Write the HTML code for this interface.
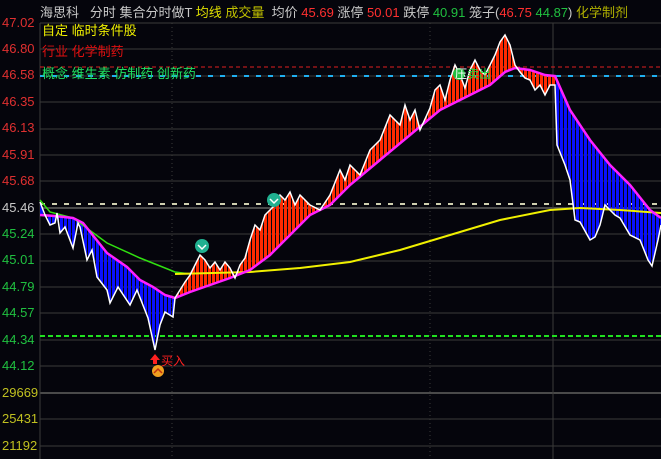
<!DOCTYPE html>
<html><head><meta charset="utf-8"><style>
body{margin:0;width:661px;height:459px;background:#05050c;overflow:hidden;font-family:"Liberation Sans","Noto Sans CJK SC",sans-serif;}
.t{position:absolute;font-size:13px;white-space:nowrap;line-height:14px}
</style></head><body>
<svg width="661" height="459" style="position:absolute;left:0;top:0">
<defs>
<pattern id="pr" width="4" height="4" patternUnits="userSpaceOnUse"><rect width="3" height="4" fill="#ff2a00"/></pattern>
<pattern id="pb" width="4" height="4" patternUnits="userSpaceOnUse"><rect width="3" height="4" fill="#0a10ff"/></pattern>
</defs>
<g stroke="#3a3a3a" stroke-width="1">
<line x1="40" y1="23" x2="661" y2="23"/>
<line x1="40" y1="49" x2="661" y2="49"/><line x1="40" y1="76" x2="661" y2="76"/>
<line x1="40" y1="102" x2="661" y2="102"/><line x1="40" y1="129" x2="661" y2="129"/>
<line x1="40" y1="155" x2="661" y2="155"/><line x1="40" y1="181" x2="661" y2="181"/>
<line x1="40" y1="208" x2="661" y2="208" stroke-width="2" stroke="#4a4a4a"/><line x1="40" y1="234" x2="661" y2="234"/>
<line x1="40" y1="261" x2="661" y2="261"/><line x1="40" y1="287" x2="661" y2="287"/>
<line x1="40" y1="313" x2="661" y2="313"/><line x1="40" y1="340" x2="661" y2="340"/>
<line x1="40" y1="366" x2="661" y2="366"/>
<line x1="40" y1="393" x2="661" y2="393" stroke-width="2" stroke="#4a4a4a"/>
<line x1="40" y1="419" x2="661" y2="419"/><line x1="40" y1="446" x2="661" y2="446"/>
<line x1="40" y1="23" x2="40" y2="459"/>
<line x1="553" y1="23" x2="553" y2="459"/>
<line x1="172" y1="23" x2="172" y2="459" stroke-dasharray="1,3"/>
<line x1="430" y1="23" x2="430" y2="459" stroke-dasharray="1,3"/>
</g>
<line x1="40" y1="67" x2="661" y2="67" stroke="#e02020" stroke-dasharray="4,3"/>
<line x1="40" y1="76" x2="661" y2="76" stroke="#20b0f0" stroke-dasharray="5,7" stroke-width="2"/>
<line x1="40" y1="204" x2="661" y2="204" stroke="#d0d0b0" stroke-dasharray="5,7" stroke-width="2"/>
<line x1="40" y1="336" x2="661" y2="336" stroke="#20e020" stroke-dasharray="5,3" stroke-width="2"/>
<!-- fills -->
<polygon fill="url(#pb)" points="40,202 45,215 50,225 55,223 57,213 60,233 65,227 73,248 78,223 80,227 87,260 92,250 97,277 107,290 110,303 118,287 130,305 137,290 148,318 155,350 160,325 165,312 173,317 175,298 165,295 153,287 140,280 127,267 107,253 83,223 73,218 55,216 40,215"/>
<polygon fill="url(#pr)" points="175,298 180,290 185,282 190,275 195,265 200,255 205,260 210,268 215,262 220,270 225,262 230,268 235,278 240,265 245,258 250,240 255,225 260,230 265,215 270,210 275,205 280,195 285,200 290,192 295,205 300,195 310,205 320,210 330,195 340,170 345,180 350,165 360,175 370,150 380,140 390,115 400,125 405,105 410,120 415,110 420,130 430,108 435,90 440,85 445,100 450,80 455,65 460,75 465,88 470,70 475,60 480,70 485,75 490,65 495,55 500,42 505,35 510,45 515,65 520,72 525,78 530,80 535,90 540,85 545,95 550,85 555,85 555,76 545,75 530,70 515,68 505,72 490,85 470,95 440,110 410,135 380,160 350,185 330,205 310,215 290,235 270,255 250,270 230,278 210,285 190,292"/>
<polygon fill="url(#pb)" points="555,85 557,145 565,165 570,180 575,220 580,222 590,240 595,237 600,225 605,205 615,215 620,218 630,235 640,240 648,260 652,266 658,240 661,225 661,218 650,210 630,185 610,165 590,140 570,110 555,76"/>
<polyline fill="none" stroke="#30e010" stroke-width="1.5" points="40,200 50,212 73,218 107,243 140,258 175,272 190,274"/>
<polyline fill="none" stroke="#f0f000" stroke-width="2" points="175,274 250,272 300,268 350,262 400,250 450,235 500,220 550,210 580,208 620,210 661,213"/>
<polyline fill="none" stroke="#ff20ff" stroke-width="2.5" points="40,215 55,216 73,218 83,223 107,253 127,267 140,280 153,287 165,295 175,298 190,292 210,285 230,278 250,270 270,255 290,235 310,215 330,205 350,185 380,160 410,135 440,110 470,95 490,85 505,72 515,68 530,70 545,75 555,76 570,110 590,140 610,165 630,185 650,210 661,218"/>
<polyline fill="none" stroke="#fff" stroke-width="1.5" points="40,202 45,215 50,225 55,223 57,213 60,233 65,227 73,248 78,223 80,227 87,260 92,250 97,277 107,290 110,303 118,287 130,305 137,290 148,318 155,350 160,325 165,312 173,317 175,298 180,290 185,282 190,275 195,265 200,255 205,260 210,268 215,262 220,270 225,262 230,268 235,278 240,265 245,258 250,240 255,225 260,230 265,215 270,210 275,205 280,195 285,200 290,192 295,205 300,195 310,205 320,210 330,195 340,170 345,180 350,165 360,175 370,150 380,140 390,115 400,125 405,105 410,120 415,110 420,130 430,108 435,90 440,85 445,100 450,80 455,65 460,75 465,88 470,70 475,60 480,70 485,75 490,65 495,55 500,42 505,35 510,45 515,65 520,72 525,78 530,80 535,90 540,85 545,95 550,85 555,85 557,145 565,165 570,180 575,220 580,222 590,240 595,237 600,225 605,205 615,215 620,218 630,235 640,240 648,260 652,266 658,240 661,225"/>
<circle cx="202" cy="246" r="7" fill="#20b090"/><path d="M198,245 l4,4 l4,-4" stroke="#fff" fill="none" stroke-width="1.5"/>
<circle cx="274" cy="200" r="7" fill="#20b090"/><path d="M270,199 l4,4 l4,-4" stroke="#fff" fill="none" stroke-width="1.5"/>
<circle cx="459" cy="74" r="6" fill="#20c040"/>
<path d="M155,354 l-5,6 h3 v4 h4 v-4 h3z" fill="#ff2020"/>
<circle cx="158" cy="371" r="6" fill="#f0a020"/><path d="M154,373 l4,-4 l4,4" stroke="#c03010" fill="none" stroke-width="1.5"/>
</svg>
<div class="t" style="left:40px;top:6px;color:#c8c8c8">海思科&nbsp;&nbsp;&nbsp;分时 集合分时做T <span style="color:#e0e000">均线</span> <span style="color:#c0c000">成交量</span>&nbsp;&nbsp;均价 <span style="color:#ff3030">45.69</span> 涨停 <span style="color:#ff3030">50.01</span> 跌停 <span style="color:#20c040">40.91</span> 笼子(<span style="color:#ff3030">46.75</span> <span style="color:#20c040">44.87</span>) <span style="color:#b0b000">化学制剂</span></div>
<div class="t" style="left:42px;top:24px;color:#f0f000">自定 临时条件股</div>
<div class="t" style="left:42px;top:45px;color:#e01010">行业 化学制药</div>
<div class="t" style="left:42px;top:67px;color:#20e060">概念 维生素 仿制药 创新药</div>
<div class="t" style="left:455px;top:67px;color:#20e040;font-size:12px"><span style="color:#fff">压</span>卖出</div>
<div class="t" style="left:161px;top:354px;color:#ff2020;font-size:12px">买入</div>
<div class="t" style="left:2px;top:16px;color:#e03030">47.02</div>
<div class="t" style="left:2px;top:42px;color:#e03030">46.80</div>
<div class="t" style="left:2px;top:68px;color:#e03030">46.58</div>
<div class="t" style="left:2px;top:95px;color:#e03030">46.35</div>
<div class="t" style="left:2px;top:121px;color:#e03030">46.13</div>
<div class="t" style="left:2px;top:148px;color:#e03030">45.91</div>
<div class="t" style="left:2px;top:174px;color:#e03030">45.68</div>
<div class="t" style="left:2px;top:201px;color:#c8c8c8">45.46</div>
<div class="t" style="left:2px;top:227px;color:#20c040">45.24</div>
<div class="t" style="left:2px;top:253px;color:#20c040">45.01</div>
<div class="t" style="left:2px;top:280px;color:#20c040">44.79</div>
<div class="t" style="left:2px;top:306px;color:#20c040">44.57</div>
<div class="t" style="left:2px;top:333px;color:#20c040">44.34</div>
<div class="t" style="left:2px;top:359px;color:#20c040">44.12</div>
<div class="t" style="left:2px;top:386px;color:#c0c020">29669</div>
<div class="t" style="left:2px;top:412px;color:#c0c020">25431</div>
<div class="t" style="left:2px;top:439px;color:#c0c020">21192</div>
</body></html>
